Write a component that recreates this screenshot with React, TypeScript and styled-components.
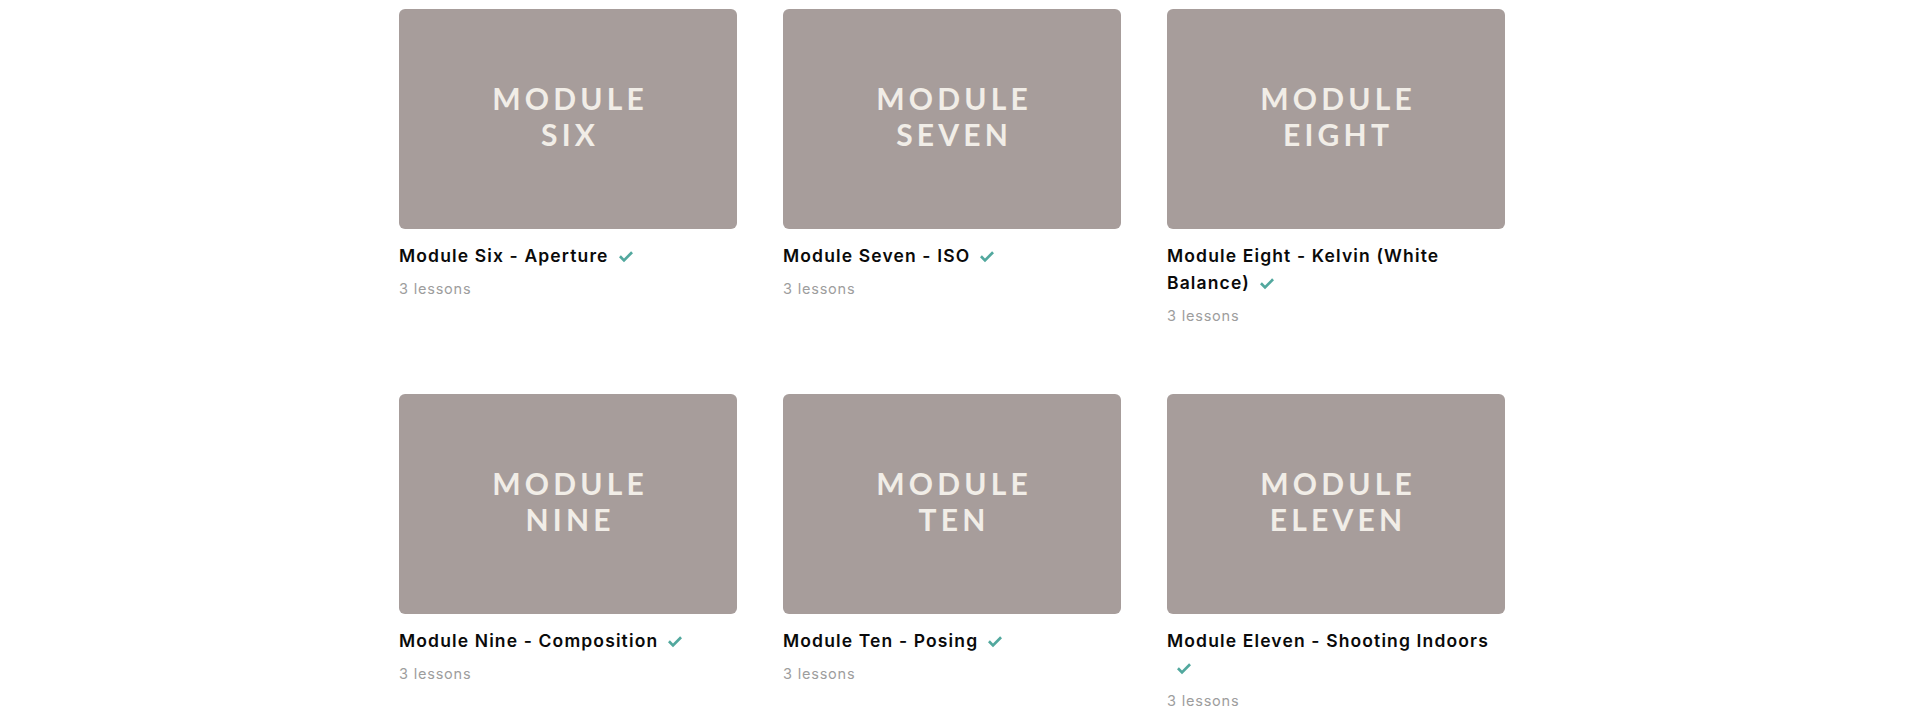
import React from "react";
import styled, { createGlobalStyle } from "styled-components";

const Global = createGlobalStyle`
  html, body { margin: 0; padding: 0; background: #ffffff; }
  body { font-family: "Inter", "Liberation Sans", sans-serif; }
`;

const Grid = styled.div`
  display: grid;
  grid-template-columns: repeat(3, 338px);
  column-gap: 46px;
  row-gap: 67px;
  margin: 9px 0 0 399px;
  align-items: start;
`;

const Card = styled.div`
  display: flex;
  flex-direction: column;
`;

const Thumb = styled.div`
  height: 220px;
  border-radius: 6px;
  background: #a79d9b;
  display: flex;
  flex-direction: column;
  align-items: center;
  justify-content: center;
  padding-bottom: 6px;
  box-sizing: border-box;
`;

const ThumbLine = styled.div`
  font-family: "Lato", "Open Sans", sans-serif;
  font-weight: 700;
  font-size: 30px;
  line-height: 36px;
  letter-spacing: 0.14em;
  color: #f1ede7;
  padding-left: 0.14em;
  text-align: center;
`;

const Title = styled.div`
  margin-top: 13px;
  font-family: "Inter", "Liberation Sans", sans-serif;
  font-weight: 600;
  font-size: 17.5px;
  line-height: 27px;
  letter-spacing: 0.065em;
  color: #0a0a0a;
`;

const Check = styled.svg`
  display: inline-block;
  width: 16px;
  height: 12px;
  margin-left: 9px;
  vertical-align: -1px;
`;

const Lessons = styled.div`
  margin-top: 9px;
  font-family: "Inter", "Liberation Sans", sans-serif;
  font-size: 14.5px;
  line-height: 22px;
  letter-spacing: 0.055em;
  color: #9d9d9d;
`;

const modules = [
  { word: "SIX", title: "Module Six - Aperture" },
  { word: "SEVEN", title: "Module Seven - ISO" },
  { word: "EIGHT", title: "Module Eight - Kelvin (White Balance)" },
  { word: "NINE", title: "Module Nine - Composition" },
  { word: "TEN", title: "Module Ten - Posing" },
  { word: "ELEVEN", title: "Module Eleven - Shooting Indoors" },
];

const CheckIcon = () => (
  <Check viewBox="0 0 16 12" aria-hidden="true">
    <path d="M1 6.2 L2.9 4.3 L6 7.4 L13.1 0.3 L15 2.2 L6 11.2 Z" fill="#52a89e" />
  </Check>
);

export default function App() {
  return (
    <>
      <Global />
      <Grid>
        {modules.map((m) => (
          <Card key={m.word}>
            <Thumb>
              <ThumbLine>MODULE</ThumbLine>
              <ThumbLine>{m.word}</ThumbLine>
            </Thumb>
            <Title>
              {m.title}
              <CheckIcon />
            </Title>
            <Lessons>3 lessons</Lessons>
          </Card>
        ))}
      </Grid>
    </>
  );
}
